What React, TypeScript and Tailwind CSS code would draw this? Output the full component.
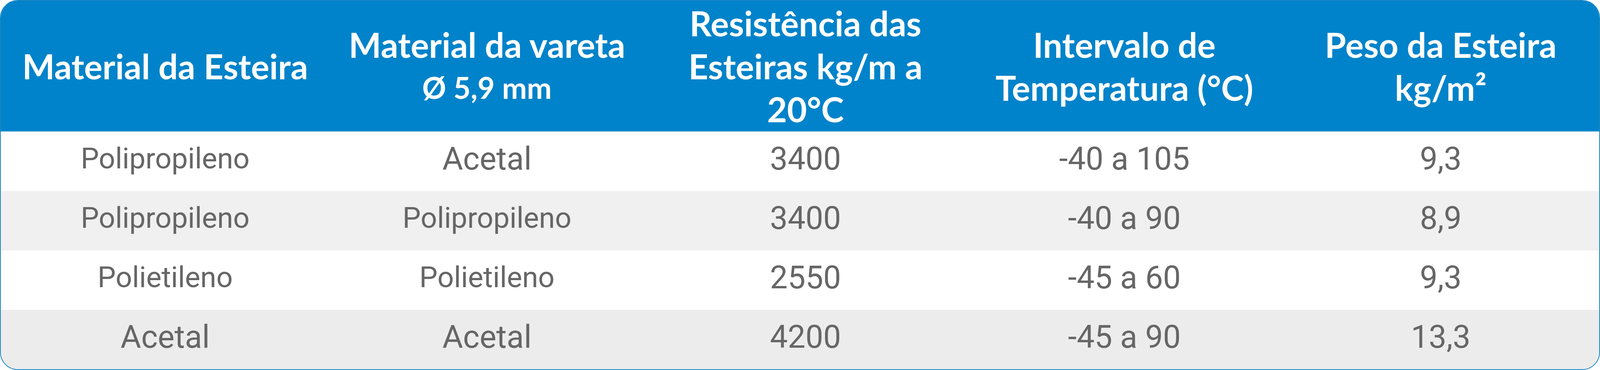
const rows = [
  ["Polipropileno", "Acetal", "3400", "-40 a 105", "9,3"],
  ["Polipropileno", "Polipropileno", "3400", "-40 a 90", "8,9"],
  ["Polietileno", "Polietileno", "2550", "-45 a 60", "9,3"],
  ["Acetal", "Acetal", "4200", "-45 a 90", "13,3"],
];

const rowBg = ["bg-white", "bg-[#f0f0f0]", "bg-white", "bg-[#ececed]"];

const cols = "grid grid-cols-[898fr_860fr_880fr_862fr_866fr]";

function Cell({ value }: { value: string }) {
  // long words were set a bit smaller in the original artwork
  const small = value.length > 9;
  return (
    <div
      className={
        small
          ? "flex min-w-0 items-center justify-center pb-[14px] text-[74px] leading-none text-[#666666]"
          : "flex min-w-0 items-center justify-center pb-[14px] text-[81px] leading-none text-[#666666]"
      }
    >
      {value}
    </div>
  );
}

export default function App() {
  return (
    <div className="h-[947px] w-full overflow-hidden bg-white">
      <div className="h-full w-full overflow-hidden rounded-[46px] border-2 border-[#1b86c7] font-['Roboto',sans-serif]">
        <div
          className={`${cols} h-[335px] border-b-2 border-[#4da3d6] bg-[#0083ca] text-center font-['Lato',sans-serif] text-[88px] font-bold leading-[110px] text-white`}
        >
          <div className="flex min-w-0 items-center justify-center">
            Material da Esteira
          </div>
          <div className="flex min-w-0 flex-col items-center justify-center">
            <span>Material da vareta</span>
            <span className="text-[76px]">Ø 5,9 mm</span>
          </div>
          <div className="flex min-w-0 flex-col items-center justify-center">
            <span>Resistência das</span>
            <span>Esteiras kg/m a</span>
            <span>20°C</span>
          </div>
          <div className="flex min-w-0 flex-col items-center justify-center">
            <span>Intervalo de</span>
            <span>Temperatura (°C)</span>
          </div>
          <div className="flex min-w-0 flex-col items-center justify-center">
            <span>Peso da Esteira</span>
            <span>kg/m²</span>
          </div>
        </div>
        {rows.map((row, i) => (
          <div key={i} className={`${cols} h-[152px] ${rowBg[i]}`}>
            {row.map((value, j) => (
              <Cell key={j} value={value} />
            ))}
          </div>
        ))}
      </div>
    </div>
  );
}
